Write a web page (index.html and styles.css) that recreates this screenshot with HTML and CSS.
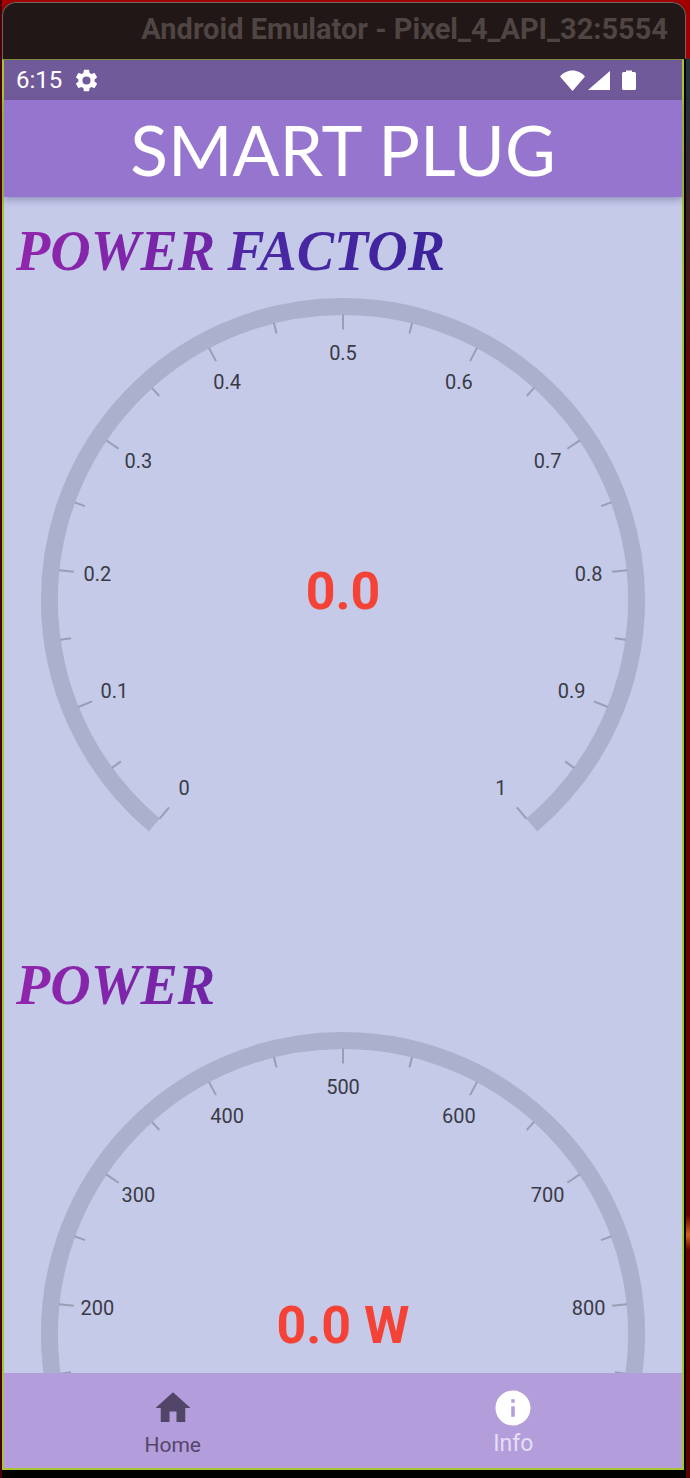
FILE: index.html
```html
<!DOCTYPE html>
<html lang="en">
<head>
  <meta charset="UTF-8" />
  <title>Smart Plug</title>
  <meta name="viewport" content="width=device-width, initial-scale=1.0" />
  <link rel="stylesheet" href="styles.css">
</head>
<body>
  <div class="window">
    <div class="title-bar">Android Emulator - Pixel_4_API_32:5554</div>

    <div class="screen">
      <div class="status-bar">
        <span class="clock">6:15</span>
        <svg class="gear" viewBox="0 0 24 24"><path d="M19.14 12.94c.04-.3.06-.61.06-.94 0-.32-.02-.64-.07-.94l2.03-1.58a.49.49 0 0 0 .12-.61l-1.92-3.32a.49.49 0 0 0-.59-.22l-2.39.96c-.5-.38-1.03-.7-1.62-.94l-.36-2.54a.48.48 0 0 0-.48-.41h-3.84c-.24 0-.43.17-.47.41l-.36 2.54c-.59.24-1.13.57-1.62.94l-2.39-.96a.49.49 0 0 0-.59.22L2.74 8.87c-.12.21-.08.47.12.61l2.03 1.58c-.05.3-.09.63-.09.94s.02.64.07.94l-2.03 1.58a.49.49 0 0 0-.12.61l1.92 3.32c.12.22.37.29.59.22l2.39-.96c.5.38 1.03.7 1.62.94l.36 2.54c.05.24.24.41.48.41h3.84c.24 0 .44-.17.47-.41l.36-2.54c.59-.24 1.13-.56 1.62-.94l2.39.96c.22.08.47 0 .59-.22l1.92-3.32a.49.49 0 0 0-.12-.61l-2.01-1.58zM12 15.6A3.6 3.6 0 1 1 12 8.4a3.6 3.6 0 0 1 0 7.2z"/></svg>
        <span class="status-right">
          <svg class="wifi" viewBox="0 0 25 21"><path d="M0 6.5C3 3 7.5 0.5 12.5 0.5S22 3 25 6.5L12.5 21z"/></svg>
          <svg class="signal" viewBox="0 0 22 19"><path d="M22 0v19H0z"/></svg>
          <svg class="battery" viewBox="0 0 14 20"><path d="M4 2V0.5h6V2h2.5q1.5 0 1.5 1.5v15q0 1.5-1.5 1.5h-11Q0 20 0 18.500v-15Q0 2 1.500 2z"/></svg>
        </span>
      </div>

      <div class="app-bar">SMART PLUG</div>

      <div class="content">
        <section class="meter">
          <h2 class="meter-title">POWER FACTOR</h2>
          <svg class="gauge" viewBox="0 0 678 674">
            <defs>
              <g id="dial">
                <path class="band" d="M-189 225.200A294 294 0 1 1 189 225.200"/>
                <g class="ticks">
                  <line x1="271" x2="286" transform="rotate(130)"/>
                  <line x1="275" x2="286" transform="rotate(144)"/>
                  <line x1="271" x2="286" transform="rotate(158)"/>
                  <line x1="275" x2="286" transform="rotate(172)"/>
                  <line x1="271" x2="286" transform="rotate(186)"/>
                  <line x1="275" x2="286" transform="rotate(200)"/>
                  <line x1="271" x2="286" transform="rotate(214)"/>
                  <line x1="275" x2="286" transform="rotate(228)"/>
                  <line x1="271" x2="286" transform="rotate(242)"/>
                  <line x1="275" x2="286" transform="rotate(256)"/>
                  <line x1="271" x2="286" transform="rotate(270)"/>
                  <line x1="275" x2="286" transform="rotate(284)"/>
                  <line x1="271" x2="286" transform="rotate(298)"/>
                  <line x1="275" x2="286" transform="rotate(312)"/>
                  <line x1="271" x2="286" transform="rotate(326)"/>
                  <line x1="275" x2="286" transform="rotate(340)"/>
                  <line x1="271" x2="286" transform="rotate(354)"/>
                  <line x1="275" x2="286" transform="rotate(8)"/>
                  <line x1="271" x2="286" transform="rotate(22)"/>
                  <line x1="275" x2="286" transform="rotate(36)"/>
                  <line x1="271" x2="286" transform="rotate(50)"/>
                </g>
              </g>
            </defs>
            <use href="#dial" x="339" y="318.500"/>
            <g class="labels">
              <text x="180" y="514">0</text>
              <text x="110" y="417">0.1</text>
              <text x="93" y="299">0.2</text>
              <text x="134" y="186">0.3</text>
              <text x="223" y="107">0.4</text>
              <text x="339" y="78">0.5</text>
              <text x="455" y="107">0.6</text>
              <text x="544" y="186">0.7</text>
              <text x="585" y="299">0.8</text>
              <text x="568" y="417">0.9</text>
              <text x="497" y="514">1</text>
            </g>
            <text class="value" x="339" y="328">0.0</text>
          </svg>
        </section>

        <section class="meter">
          <h2 class="meter-title">POWER</h2>
          <svg class="gauge" viewBox="0 0 678 674">
            <use href="#dial" x="339" y="318.500"/>
            <g class="labels">
              <text x="93" y="299">200</text>
              <text x="134" y="186">300</text>
              <text x="223" y="107">400</text>
              <text x="339" y="78">500</text>
              <text x="455" y="107">600</text>
              <text x="544" y="186">700</text>
              <text x="585" y="299">800</text>
            </g>
            <text class="value" x="339" y="328">0.0 W</text>
          </svg>
        </section>
      </div>

      <nav class="bottom-nav">
        <div class="nav-item home">
          <svg class="nav-icon" viewBox="0 0 24 24"><path d="M10 20v-6h4v6h5v-8h3L12 3 2 12h3v8z"/></svg>
          <span class="nav-label">Home</span>
        </div>
        <div class="nav-item active">
          <svg class="nav-icon" viewBox="0 0 24 24"><path d="M12 2C6.480 2 2 6.480 2 12s4.480 10 10 10 10-4.480 10-10S17.520 2 12 2zm1 15h-2v-6h2v6zm0-8h-2V7h2v2z"/></svg>
          <span class="nav-label">Info</span>
        </div>
      </nav>
    </div>
  </div>
</body>
</html>
```

FILE: styles.css
```css
html, body {
  margin: 0;
  padding: 0;
  width: 100%;
  height: 100%;
  overflow: hidden;
  box-sizing: border-box;
}

*, *::before, *::after {
  box-sizing: inherit;
}

body {
  font-family: 'Roboto', 'Liberation Sans', sans-serif;
  background:
    linear-gradient(#4a0008, #4a0008) left top / 2px 100% no-repeat,
    linear-gradient(to bottom, #a30000 0, #a30000 58px, #24323a 59px, #24323a 90px, #6a0000 400px, #6a0000 1215px, #d2601c 1235px, #6a0000 1250px, #5c0000 100%);
}

.window {
  width: 684px;
  height: 1476px;
  margin: 2px 0 0 2px;
  background: #000;
  border-radius: 14px 14px 0 0;
  display: flex;
  flex-direction: column;
}

.title-bar {
  height: 57px;
  flex: none;
  display: flex;
  align-items: center;
  justify-content: flex-end;
  padding: 0 17px 4px 0;
  background: #211716;
  border: 1px solid #6e6563;
  border-bottom: none;
  border-radius: 14px 14px 0 0;
  color: #4f4543;
  font-size: 29px;
  font-weight: 700;
  white-space: nowrap;
}

.screen {
  width: 682px;
  height: 1411px;
  flex: none;
  display: flex;
  flex-direction: column;
  border: 2px solid #a5c534;
  border-top: 1px solid #7c8a3c;
}

.status-bar {
  height: 40px;
  flex: none;
  display: flex;
  align-items: center;
  padding: 0 46px 0 12px;
  background: #715a99;
  color: #fff;
}

.clock {
  font-size: 24px;
}

.gear {
  width: 27px;
  height: 27px;
  margin-left: 11px;
  fill: #fff;
}

.status-right {
  margin-left: auto;
  display: flex;
  align-items: center;
  gap: 3px;
}

.status-right svg {
  fill: #fff;
}

.wifi {
  width: 25px;
  height: 21px;
}

.signal {
  width: 22px;
  height: 19px;
}

.battery {
  width: 14px;
  height: 20px;
  margin-left: 9px;
}

.app-bar {
  height: 97px;
  flex: none;
  position: relative;
  z-index: 1;
  display: flex;
  align-items: center;
  justify-content: center;
  background: #9575cd;
  box-shadow: 0 3px 7px rgba(60,50,110,0.35);
  color: #fff;
  font-family: 'Lato', 'Liberation Sans', sans-serif;
  font-size: 69.500px;
  font-weight: 400;
}

.content {
  flex: 1;
  min-height: 0;
  overflow: hidden;
  padding-top: 24px;
  background: #c4cae8;
}

.meter {
  height: 734px;
}

.meter-title {
  margin: 0 0 1px;
  padding-left: 12px;
  height: 60px;
  font-family: 'Liberation Serif', 'DejaVu Serif', serif;
  font-size: 56px;
  line-height: 60px;
  font-weight: 700;
  font-style: italic;
  word-spacing: -2px;
  width: 445px;
  color: transparent;
  background: linear-gradient(to right, #9425ad 0, #6f25a6 47%, #4c29a5 55%, #3b229b 100%);
  -webkit-background-clip: text;
  background-clip: text;
}

.gauge {
  display: block;
  width: 678px;
  height: 673px;
}

.band {
  fill: none;
  stroke: #abb0cd;
  stroke-width: 17;
}

.ticks line {
  stroke: #9a9db4;
  stroke-width: 2;
}

.labels text {
  font-size: 20px;
  fill: #3a3a46;
  text-anchor: middle;
}

.value {
  font-size: 52px;
  font-weight: 700;
  fill: #f44336;
  text-anchor: middle;
}

.bottom-nav {
  height: 95px;
  flex: none;
  display: flex;
  background: #b39ddb;
}

.nav-item {
  flex: 1;
  display: flex;
  flex-direction: column;
  align-items: center;
  padding-top: 14px;
  color: #54466b;
  fill: #514568;
}

.nav-item.home {
  padding-right: 3px;
}

.nav-item.active {
  color: #e6dff3;
  fill: #fff;
}

.nav-icon {
  width: 42px;
  height: 42px;
}

.nav-label {
  font-size: 21px;
  line-height: 24px;
  margin-top: 4px;
}

.nav-item.active .nav-label {
  font-size: 23px;
  margin-top: 3px;
}
```
